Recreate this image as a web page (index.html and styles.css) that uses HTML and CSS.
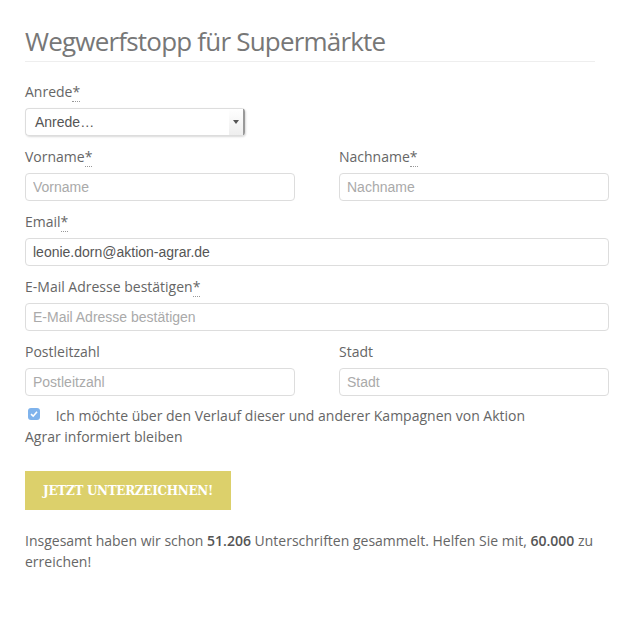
FILE: index.html
```html
<!DOCTYPE html>
<html lang="de">
<head>
  <meta charset="UTF-8">
  <meta name="viewport" content="width=device-width, initial-scale=1.0">
  <title>Wegwerfstopp für Supermärkte</title>
  <link rel="stylesheet" href="styles.css">
</head>
<body>
  <div class="container">
    <h2 class="title">Wegwerfstopp für Supermärkte</h2>

    <!-- Petition Form -->
    <form id="petition-form">
      <div class="field">
        <label for="anrede">Anrede<abbr title="Pflichtfeld">*</abbr></label>
        <div class="select-box">
          <span>Anrede…</span>
          <span class="select-arrow"></span>
        </div>
      </div>

      <div class="row">
        <div class="field">
          <label for="vorname">Vorname<abbr title="Pflichtfeld">*</abbr></label>
          <input type="text" id="vorname" placeholder="Vorname">
        </div>
        <div class="field">
          <label for="nachname">Nachname<abbr title="Pflichtfeld">*</abbr></label>
          <input type="text" id="nachname" placeholder="Nachname">
        </div>
      </div>

      <div class="field">
        <label for="email">Email<abbr title="Pflichtfeld">*</abbr></label>
        <input type="email" id="email" value="leonie.dorn@aktion-agrar.de">
      </div>

      <div class="field">
        <label for="email2">E-Mail Adresse bestätigen<abbr title="Pflichtfeld">*</abbr></label>
        <input type="email" id="email2" placeholder="E-Mail Adresse bestätigen">
      </div>

      <div class="row">
        <div class="field">
          <label for="plz">Postleitzahl</label>
          <input type="text" id="plz" placeholder="Postleitzahl">
        </div>
        <div class="field">
          <label for="stadt">Stadt</label>
          <input type="text" id="stadt" placeholder="Stadt">
        </div>
      </div>

      <div class="optin">
        <span class="checkbox">
          <svg width="8" height="8" viewBox="0 0 8 8"><path d="M1 4.2 L3.2 6.2 L7 1.8" fill="none" stroke="#fff" stroke-width="1.6"/></svg>
        </span>
        Ich möchte über den Verlauf dieser und anderer Kampagnen von Aktion Agrar informiert bleiben
      </div>

      <button type="submit">Jetzt unterzeichnen!</button>
    </form>

    <p class="counter">Insgesamt haben wir schon <strong>51.206</strong> Unterschriften gesammelt. Helfen Sie mit, <strong>60.000</strong> zu erreichen!</p>
  </div>
</body>
</html>
```

FILE: styles.css
```css
body {
  font-family: "Open Sans", Arial, sans-serif;
  margin: 0;
  padding: 0;
  background-color: #fff;
  color: #666;
}

.container {
  width: 584px;
  padding: 25px 0 0 25px;
}

.title {
  font-size: 26px;
  font-weight: 400;
  letter-spacing: -0.8px;
  color: #777;
  margin: 0;
  padding-bottom: 4px;
  border-bottom: 1px solid #eee;
  width: 570px;
  line-height: 32px;
}

form {
  margin-top: 20px;
}

.field {
  margin-bottom: 11px;
}

label {
  display: block;
  font-size: 14px;
  line-height: 20px;
  color: #666;
  margin-bottom: 6px;
}

label abbr {
  text-decoration: none;
  border-bottom: 1px dotted #999;
}

.row {
  display: flex;
  gap: 44px;
}

.row .field {
  flex: 1;
}

input {
  display: block;
  box-sizing: border-box;
  width: 100%;
  height: 28px;
  padding: 4px 7px;
  font-family: "Liberation Sans", Arial, sans-serif;
  font-size: 14px;
  color: #555;
  border: 1px solid #ddd;
  border-radius: 4px;
  outline: none;
}

input::placeholder {
  color: #aaa;
}

.select-box {
  box-sizing: border-box;
  width: 220px;
  height: 28px;
  display: flex;
  align-items: center;
  justify-content: space-between;
  padding-left: 9px;
  font-family: "Liberation Sans", Arial, sans-serif;
  font-size: 14px;
  color: #555;
  border: 1px solid #ddd;
  border-right: 2px solid #999;
  border-radius: 4px;
  box-shadow: 1px 1px 2px rgba(0, 0, 0, 0.15);
}

.select-arrow {
  width: 14px;
  height: 100%;
  display: flex;
  align-items: center;
  justify-content: center;
  background: linear-gradient(#fff, #eee);
}

.select-arrow::after {
  content: "";
  border-left: 3px solid transparent;
  border-right: 3px solid transparent;
  border-top: 4px solid #555;
}

.optin {
  font-size: 14px;
  line-height: 21px;
  color: #666;
  margin-top: -2px;
  width: 510px;
}

.checkbox {
  display: inline-flex;
  align-items: center;
  justify-content: center;
  width: 12px;
  height: 12px;
  margin: 0 12px 0 3px;
  background: #7fb3ec;
  border-radius: 3px;
  vertical-align: 3px;
}

button {
  margin-top: 24px;
  width: 206px;
  height: 39px;
  background-color: #dcd06b;
  color: #fff;
  border: none;
  font-family: "DejaVu Serif", serif;
  font-weight: bold;
  font-size: 12px;
  text-transform: uppercase;
  letter-spacing: -0.3px;
  cursor: pointer;
}

.counter {
  font-size: 14px;
  line-height: 21px;
  color: #666;
  margin: 20px 0 0 0;
  width: 590px;
}

.counter strong {
  font-weight: 600;
  color: #555;
}
```
